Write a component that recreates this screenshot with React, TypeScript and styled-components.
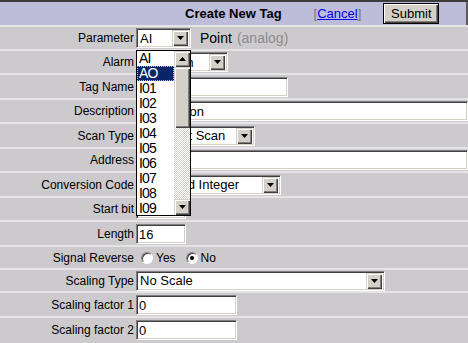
import React from "react";
import styled, { createGlobalStyle } from "styled-components";

const Global = createGlobalStyle`
  html, body {
    margin: 0;
    padding: 0;
    background: #cccacc;
  }
  body {
    font-family: "Liberation Sans", Arial, sans-serif;
    width: 468px;
    height: 343px;
    overflow: hidden;
  }
`;

const Page = styled.div`
  position: relative;
  width: 468px;
  border-top: 2px solid #3c3c3c;
`;

const HeaderRow = styled.div`
  display: flex;
  align-items: center;
  height: 23px;
  background: #bdbcd9;
  padding-left: 185px;
  border-right: 2px solid #5a5a5a;
`;

const Title = styled.span`
  font-weight: bold;
  font-size: 13px;
  color: #000;
`;

const CancelWrap = styled.span`
  margin-left: 32px;
  font-size: 13px;
  color: #777;
`;

const CancelLink = styled.a`
  color: #0000ee;
  text-decoration: underline;
`;

const SubmitButton = styled.button`
  margin-left: 22px;
  width: 56px;
  height: 21px;
  padding: 0;
  font-family: "Liberation Sans", Arial, sans-serif;
  font-size: 13px;
  color: #000;
  background: #d4d0c8;
  border: 1px solid #000;
  box-shadow: inset 1px 1px #fff, inset -1px -1px #404040, inset -2px -2px #808080;
`;

const Row = styled.div<{ $h: number }>`
  display: grid;
  grid-template-columns: 134px 1fr;
  column-gap: 2px;
  align-items: center;
  height: ${(p) => p.$h}px;
  border-top: 2px solid #e4e3e5;
  background: #cccacc;
`;

const Label = styled.div`
  text-align: right;
  font-size: 12px;
  color: #000;
  white-space: nowrap;
`;

const Value = styled.div`
  display: flex;
  align-items: center;
  min-width: 0;
  overflow: hidden;
`;

const TextBox = styled.input<{ $w: number }>`
  box-sizing: border-box;
  width: ${(p) => p.$w}px;
  height: 20px;
  padding: 1px 2px 0;
  margin: 0;
  font-family: "Liberation Sans", Arial, sans-serif;
  font-size: 13px;
  color: #000;
  background: #fff;
  border: 1px solid;
  border-color: #808080 #fff #fff #808080;
  box-shadow: inset 1px 1px #404040, inset -1px -1px #d4d0c8;
  outline: none;
`;

const SelectBox = styled.div<{ $w: number }>`
  box-sizing: border-box;
  display: flex;
  align-items: center;
  width: ${(p) => p.$w}px;
  height: 20px;
  background: #fff;
  border: 1px solid;
  border-color: #808080 #fff #fff #808080;
  box-shadow: inset 1px 1px #404040, inset -1px -1px #d4d0c8;
  padding: 2px;
`;

const SelectText = styled.span`
  flex: 1;
  font-size: 13px;
  color: #000;
  padding-left: 1px;
  white-space: nowrap;
  overflow: hidden;
`;

const ArrowButton = styled.span`
  box-sizing: border-box;
  display: flex;
  align-items: center;
  justify-content: center;
  width: 16px;
  height: 16px;
  flex: none;
  background: #d4d0c8;
  box-shadow: inset 1px 1px #d4d0c8, inset 2px 2px #fff, inset -1px -1px #404040,
    inset -2px -2px #808080;
`;

const Point = styled.span`
  margin-left: 9px;
  font-size: 14px;
  color: #000;
`;

const Analog = styled.span`
  margin-left: 5px;
  font-size: 14px;
  color: #8c8c8c;
`;

const RadioItem = styled.label`
  display: flex;
  align-items: center;
  margin-left: 5px;
  margin-right: 5px;
  font-size: 12px;
  color: #000;
`;

const RadioDot = styled.span<{ $on?: boolean }>`
  box-sizing: border-box;
  position: relative;
  width: 12px;
  height: 12px;
  margin-right: 3px;
  border-radius: 50%;
  background: #fff;
  border: 1px solid;
  border-color: #808080 #fff #fff #808080;
  box-shadow: inset 1px 1px #404040;
  &::after {
    content: "";
    display: ${(p) => (p.$on ? "block" : "none")};
    position: absolute;
    left: 3px;
    top: 3px;
    width: 4px;
    height: 4px;
    border-radius: 50%;
    background: #000;
  }
`;

/* open drop-down list of the Parameter select */
const DropList = styled.div`
  position: absolute;
  left: 136px;
  top: 48px;
  width: 55px;
  height: 166px;
  box-sizing: border-box;
  display: flex;
  background: #fff;
  border: 1px solid #000;
  z-index: 5;
`;

const ListItems = styled.div`
  flex: 1;
  display: flex;
  flex-direction: column;
`;

const ListItem = styled.div<{ $sel?: boolean }>`
  height: 15px;
  line-height: 15px;
  padding-left: 2px;
  font-size: 14px;
  letter-spacing: -0.8px;
  color: ${(p) => (p.$sel ? "#fff" : "#000")};
  background: ${(p) => (p.$sel ? "#0a246a" : "transparent")};
  outline: ${(p) => (p.$sel ? "1px dotted #f0c060" : "none")};
  outline-offset: -1px;
`;

const ScrollBar = styled.div`
  width: 16px;
  display: flex;
  flex-direction: column;
`;

const Thumb = styled.div`
  height: 61px;
  background: #d4d0c8;
  box-shadow: inset 1px 1px #d4d0c8, inset 2px 2px #fff, inset -1px -1px #404040,
    inset -2px -2px #808080;
`;

const Track = styled.div`
  flex: 1;
  background-color: #fff;
  background-image: repeating-conic-gradient(#d4d0c8 0% 25%, #fff 0% 50%);
  background-size: 2px 2px;
`;

const Tri = ({ up }: { up?: boolean }) => (
  <svg width="7" height="4" viewBox="0 0 7 4">
    <polygon points={up ? "3.5,0 7,4 0,4" : "0,0 7,0 3.5,4"} fill="#000" />
  </svg>
);

const Select = ({ w, text }: { w: number; text: string }) => (
  <SelectBox $w={w}>
    <SelectText>{text}</SelectText>
    <ArrowButton>
      <Tri />
    </ArrowButton>
  </SelectBox>
);

const options = ["AI", "AO", "I01", "I02", "I03", "I04", "I05", "I06", "I07", "I08", "I09"];

export default function App() {
  return (
    <>
      <Global />
      <Page>
        <HeaderRow>
          <Title>Create New Tag</Title>
          <CancelWrap>
            [<CancelLink href="#">Cancel</CancelLink>]
          </CancelWrap>
          <SubmitButton>Submit</SubmitButton>
        </HeaderRow>

        <Row $h={22}>
          <Label>Parameter</Label>
          <Value>
            <Select w={55} text="AI" />
            <Point>Point</Point>
            <Analog>(analog)</Analog>
          </Value>
        </Row>
        <Row $h={22}>
          <Label>Alarm</Label>
          <Value>
            <Select w={92} text="No Alarm" />
          </Value>
        </Row>
        <Row $h={23}>
          <Label>Tag Name</Label>
          <Value>
            <TextBox $w={152} defaultValue="" />
          </Value>
        </Row>
        <Row $h={22}>
          <Label>Description</Label>
          <Value>
            <TextBox $w={340} defaultValue="Description" />
          </Value>
        </Row>
        <Row $h={23}>
          <Label>Scan Type</Label>
          <Value>
            <Select w={119} text="Constant Scan" />
          </Value>
        </Row>
        <Row $h={22}>
          <Label>Address</Label>
          <Value>
            <TextBox $w={340} defaultValue="" />
          </Value>
        </Row>
        <Row $h={23}>
          <Label>Conversion Code</Label>
          <Value>
            <Select w={145} text="Unsigned Integer" />
          </Value>
        </Row>
        <Row $h={22}>
          <Label>Start bit</Label>
          <Value>
            <TextBox $w={50} defaultValue="0" />
          </Value>
        </Row>
        <Row $h={23}>
          <Label>Length</Label>
          <Value>
            <TextBox $w={50} defaultValue="16" />
          </Value>
        </Row>
        <Row $h={21}>
          <Label>Signal Reverse</Label>
          <Value>
            <RadioItem>
              <RadioDot />
              Yes
            </RadioItem>
            <RadioItem>
              <RadioDot $on />
              No
            </RadioItem>
          </Value>
        </Row>
        <Row $h={21}>
          <Label>Scaling Type</Label>
          <Value>
            <Select w={249} text="No Scale" />
          </Value>
        </Row>
        <Row $h={23}>
          <Label>Scaling factor 1</Label>
          <Value>
            <TextBox $w={101} defaultValue="0" />
          </Value>
        </Row>
        <Row $h={23}>
          <Label>Scaling factor 2</Label>
          <Value>
            <TextBox $w={101} defaultValue="0" />
          </Value>
        </Row>

        <DropList>
          <ListItems>
            {options.map((o) => (
              <ListItem key={o} $sel={o === "AO"}>
                {o}
              </ListItem>
            ))}
          </ListItems>
          <ScrollBar>
            <ArrowButton>
              <Tri up />
            </ArrowButton>
            <Thumb />
            <Track />
            <ArrowButton>
              <Tri />
            </ArrowButton>
          </ScrollBar>
        </DropList>
      </Page>
    </>
  );
}
